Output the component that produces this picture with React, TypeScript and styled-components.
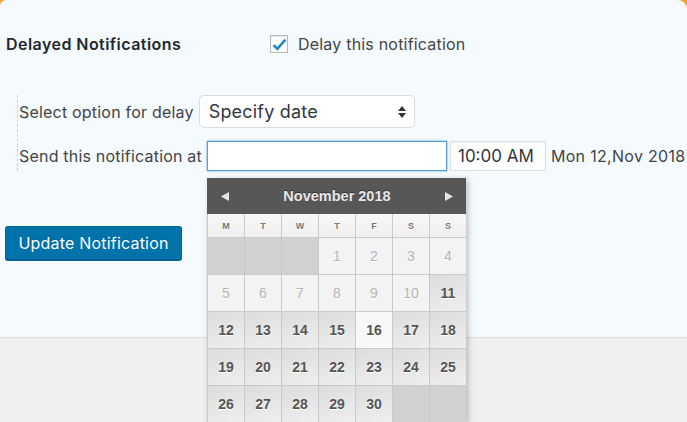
import React from "react";
import styled, { createGlobalStyle } from "styled-components";

const Global = createGlobalStyle`
  html, body { margin: 0; padding: 0; }
  body {
    width: 687px;
    height: 422px;
    overflow: hidden;
    background: #f0f0f0;
    font-family: Inter, "Noto Sans", "Liberation Sans", sans-serif;
  }
`;

const Page = styled.div`
  position: relative;
  width: 687px;
  height: 422px;
  background: #f0a232;
  display: flex;
  flex-direction: column;
`;

const Panel = styled.section`
  background: #f5fafe;
  border-top-left-radius: 6px;
  border-top-right-radius: 9px;
  border-bottom: 1px solid #dcdcdc;
  box-shadow: 0 1px 1px rgba(0, 0, 0, 0.05);
  padding: 34px 0 77px 0;
  display: flex;
  flex-direction: column;
`;

const Footer = styled.div`
  flex: 1;
  background: #f0f0f0;
`;

const HeadRow = styled.div`
  display: flex;
  align-items: center;
  height: 20px;
  padding-left: 6px;
`;

const HeadLabel = styled.div`
  width: 264px;
  font-size: 16px;
  font-weight: 600;
  letter-spacing: 0.45px;
  color: #23282d;
`;

const CheckLabel = styled.label`
  display: flex;
  align-items: center;
  gap: 10px;
  font-size: 16px;
  letter-spacing: 0.2px;
  color: #444;
`;

const CheckBox = styled.span`
  width: 16px;
  height: 16px;
  border: 1px solid #b4b9be;
  background: #fff;
  box-shadow: inset 0 1px 2px rgba(0, 0, 0, 0.1);
  display: flex;
  align-items: center;
  justify-content: center;
`;

const Options = styled.div`
  margin: 41px 0 0 17px;
  border-left: 1px dashed #cfcfcf;
  padding-left: 1px;
  display: flex;
  flex-direction: column;
  gap: 13px;
`;

const OptRow = styled.div`
  display: flex;
  align-items: center;
  gap: 5px;
  font-size: 16px;
  letter-spacing: 0.2px;
  color: #444;
  white-space: nowrap;
`;

const SelectBox = styled.div`
  border: 1px solid #dcdcdc;
  border-radius: 5px;
  background: #fff;
  display: flex;
  align-items: center;
  justify-content: space-between;
  padding: 0 8px 0 9px;
  box-sizing: border-box;
  width: 216px;
  height: 33px;
  font-size: 18px;
  letter-spacing: 0.2px;
  color: #32373c;
`;

const DateWrap = styled.div`
  position: relative;
  display: flex;
`;

const Input = styled.input<{ $w: number; $focus?: boolean }>`
  width: ${(p) => p.$w}px;
  height: 30px;
  box-sizing: border-box;
  border: 1px solid ${(p) => (p.$focus ? "#5b9dd9" : "#ddd")};
  box-shadow: ${(p) =>
    p.$focus ? "0 0 2px rgba(30,140,190,0.8)" : "inset 0 1px 2px rgba(0,0,0,0.07)"};
  background: #fff;
  font-family: inherit;
  font-size: 17px;
  color: #32373c;
  padding: 0 7px;
  margin: 0;
  outline: none;
`;

const TimeInput = styled(Input)`
  margin-left: -2px;
`;

const DateText = styled.span`
  font-size: 16px;
  letter-spacing: 0.3px;
  color: #444;
`;

const Button = styled.button`
  margin: 55px 0 0 5px;
  width: 177px;
  height: 34px;
  background: #0073aa;
  border: 1px solid #006799;
  border-bottom-color: #005a87;
  border-radius: 3px;
  box-shadow: 0 1px 0 #006799;
  color: #fff;
  font-family: inherit;
  font-size: 16px;
  letter-spacing: 0.2px;
  padding: 0;
  text-shadow: 0 -1px 1px #006799;
`;

const Calendar = styled.div`
  position: absolute;
  left: 0;
  top: calc(100% + 7px);
  width: 259px;
  background: #ccc;
  box-shadow: 2px 2px 6px rgba(0, 0, 0, 0.25);
  font-family: "Liberation Sans", Arial, sans-serif;
  letter-spacing: 0;
  z-index: 10;
`;

const CalHead = styled.div`
  height: 36px;
  background: #575757;
  display: flex;
  align-items: center;
  justify-content: space-between;
  padding: 0 13px 0 14px;
  color: #e8e8e8;
  font-size: 14.5px;
  font-weight: 700;
  text-shadow: 0 -1px 0 #333;
`;

const Grid = styled.div`
  display: grid;
  grid-template-columns: repeat(7, 36px);
  gap: 1px;
  background: #c9c9c9;
  padding-left: 1px;
`;

const DayName = styled.div`
  height: 23px;
  background: linear-gradient(#f7f7f7, #efefef);
  display: flex;
  align-items: center;
  justify-content: center;
  font-size: 9px;
  font-weight: 700;
  color: #777;
  text-shadow: 0 1px 0 #fff;
`;

type CellKind = "empty" | "off" | "on" | "today";

const Cell = styled.div<{ $kind: CellKind }>`
  height: 36px;
  display: flex;
  align-items: center;
  justify-content: center;
  font-size: 14px;
  font-weight: ${(p) => (p.$kind === "off" ? 400 : 700)};
  color: ${(p) => (p.$kind === "off" ? "#b4b4b4" : "#555")};
  text-shadow: 0 1px 0 #fff;
  background: ${(p) =>
    p.$kind === "empty"
      ? "#d1d1d1"
      : p.$kind === "off"
      ? "#f3f3f3"
      : p.$kind === "today"
      ? "#f8f8f8"
      : "linear-gradient(160deg, #dcdcdc, #efefef)"};
`;

const days = ["M", "T", "W", "T", "F", "S", "S"];

const cells: { n?: number; k: CellKind }[] = [
  { k: "empty" },
  { k: "empty" },
  { k: "empty" },
  ...Array.from({ length: 30 }, (_, i) => {
    const n = i + 1;
    const k: CellKind = n <= 10 ? "off" : n === 16 ? "today" : "on";
    return { n, k };
  }),
  { k: "empty" },
  { k: "empty" },
];

const Arrow = ({ dir }: { dir: "l" | "r" }) => (
  <svg width="8" height="9" viewBox="0 0 8 9">
    <polygon points={dir === "l" ? "8,0 8,9 0,4.5" : "0,0 0,9 8,4.5"} fill="#e6e6e6" />
  </svg>
);

export default function App() {
  return (
    <>
      <Global />
      <Page>
        <Panel>
          <HeadRow>
            <HeadLabel>Delayed Notifications</HeadLabel>
            <CheckLabel>
              <CheckBox>
                <svg width="15" height="15" viewBox="0 0 14 14">
                  <path d="M1.5 7.5 L5 11 L12.5 2.5" fill="none" stroke="#1e8cbe" strokeWidth="2.4" />
                </svg>
              </CheckBox>
              Delay this notification
            </CheckLabel>
          </HeadRow>
          <Options>
            <OptRow>
              Select option for delay
              <SelectBox>
                Specify date
                <svg width="8" height="14" viewBox="0 0 8 14">
                  <polygon points="0,6 8,6 4,1" fill="#333" />
                  <polygon points="0,8 8,8 4,13" fill="#333" />
                </svg>
              </SelectBox>
            </OptRow>
            <OptRow>
              Send this notification at
              <DateWrap>
                <Input $w={240} $focus defaultValue="" />
                <Calendar>
                  <CalHead>
                    <Arrow dir="l" />
                    <span>November 2018</span>
                    <Arrow dir="r" />
                  </CalHead>
                  <Grid>
                    {days.map((d, i) => (
                      <DayName key={i}>{d}</DayName>
                    ))}
                    {cells.map((c, i) => (
                      <Cell key={i} $kind={c.k}>
                        {c.n}
                      </Cell>
                    ))}
                  </Grid>
                </Calendar>
              </DateWrap>
              <TimeInput $w={96} defaultValue="10:00 AM" />
              <DateText>Mon 12,Nov 2018</DateText>
            </OptRow>
          </Options>
          <div>
            <Button>Update Notification</Button>
          </div>
        </Panel>
        <Footer />
      </Page>
    </>
  );
}
